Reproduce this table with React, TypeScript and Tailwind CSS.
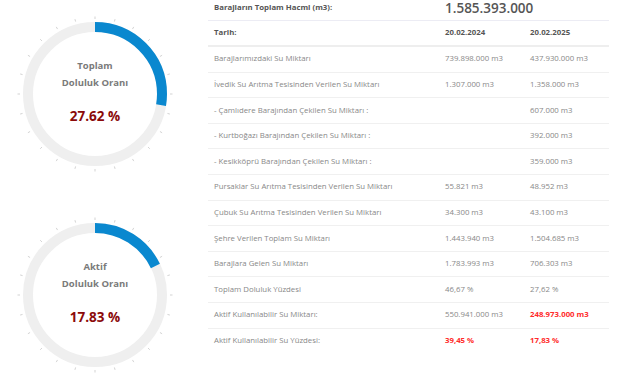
import React from 'react';

const rows = [
    { label: 'Barajlarımızdaki Su Miktarı', a: '739.898.000 m3', b: '437.930.000 m3' },
    { label: 'İvedik Su Arıtma Tesisinden Verilen Su Miktarı', a: '1.307.000 m3', b: '1.358.000 m3' },
    { label: '- Çamlıdere Barajından Çekilen Su Miktarı :', a: '', b: '607.000 m3' },
    { label: '- Kurtboğazı Barajından Çekilen Su Miktarı :', a: '', b: '392.000 m3' },
    { label: '- Kesikköprü Barajından Çekilen Su Miktarı :', a: '', b: '359.000 m3' },
    { label: 'Pursaklar Su Arıtma Tesisinden Verilen Su Miktarı', a: '55.821 m3', b: '48.952 m3' },
    { label: 'Çubuk Su Arıtma Tesisinden Verilen Su Miktarı', a: '34.300 m3', b: '43.100 m3' },
    { label: 'Şehre Verilen Toplam Su Miktarı', a: '1.443.940 m3', b: '1.504.685 m3' },
    { label: 'Barajlara Gelen Su Miktarı', a: '1.783.993 m3', b: '706.303 m3' },
    { label: 'Toplam Doluluk Yüzdesi', a: '46,67 %', b: '27,62 %' },
    { label: 'Aktif Kullanılabilir Su Miktarı:', a: '550.941.000 m3', b: '248.973.000 m3', redB: true },
    { label: 'Aktif Kullanılabilir Su Yüzdesi:', a: '39,45 %', b: '17,83 %', redA: true, redB: true, last: true },
];

function Gauge({ title, value, percent }: { title: string; value: string; percent: number }) {
    const r = 67;
    const c = 2 * Math.PI * r;
    const ticks = Array.from({ length: 24 }, (_, i) => i * 15);
    return (
        <div className="relative w-[170px] h-[170px]">
            <svg width="170" height="170" viewBox="0 0 170 170" className="absolute inset-0">
                {ticks.map((deg) => {
                    const a = (deg * Math.PI) / 180;
                    return (
                        <line
                            key={deg}
                            x1={85 + Math.sin(a) * 75}
                            y1={85 - Math.cos(a) * 75}
                            x2={85 + Math.sin(a) * 77.5}
                            y2={85 - Math.cos(a) * 77.5}
                            stroke="#c8c8c8"
                            strokeWidth="0.8"
                        />
                    );
                })}
                <circle cx="85" cy="85" r={r} fill="none" stroke="#efefef" strokeWidth="10" />
                <circle
                    cx="85"
                    cy="85"
                    r={r}
                    fill="none"
                    stroke="#0a88cf"
                    strokeWidth="10"
                    strokeDasharray={`${(c * percent) / 100} ${c}`}
                    transform="rotate(-90 85 85)"
                />
            </svg>
            <div className="absolute inset-0 flex flex-col items-center">
                <div className="mt-[48px] text-[9.5px] leading-[17px] font-bold text-[#7a7a7a]">{title}</div>
                <div className="text-[9.5px] leading-[17px] font-bold text-[#7a7a7a]">Doluluk Oranı</div>
                <div className="mt-[17px] text-[13.5px] leading-[17px] font-bold text-[#8b0a0a]">{value}</div>
            </div>
        </div>
    );
}

export default function App() {
    return (
        <div className="w-[640px] h-[377px] bg-white flex overflow-hidden" style={{ fontFamily: '"Open Sans", sans-serif' }}>
            {/* Gauges */}
            <div className="w-[208px] pl-[10px] pt-[9px] flex flex-col gap-[34px]">
                <Gauge title="Toplam" value="27.62 %" percent={27.62} />
                <Gauge title="Aktif" value="17.83 %" percent={17.83} />
            </div>

            {/* Table */}
            <div className="w-[401px] text-[7.8px]">
                <div className="h-[21px] flex border-b border-[#ececf4]">
                    <div className="w-[231px] pl-[6px] font-bold text-[#555] leading-[14px]">Barajların Toplam Hacmi (m3):</div>
                    <div className="pl-[6px] text-[13.5px] leading-[16px] font-semibold text-[#555]">1.585.393.000</div>
                </div>
                <div className="h-[26px] flex items-center border-b-2 border-[#eeeeee] font-bold text-[#555]">
                    <div className="w-[231px] pl-[6px]">Tarih:</div>
                    <div className="w-[85px] pl-[6px]">20.02.2024</div>
                    <div className="w-[85px] pl-[6px]">20.02.2025</div>
                </div>
                {rows.map((row) => (
                    <div
                        key={row.label}
                        className={`h-[25.6px] flex items-center text-[#888] ${row.last ? '' : 'border-b border-[#f0f0f0]'}`}
                    >
                        <div className="w-[231px] pl-[6px]">{row.label}</div>
                        <div className={`w-[85px] pl-[6px] ${row.redA ? 'font-bold text-[#ff2b2b]' : ''}`}>{row.a}</div>
                        <div className={`w-[85px] pl-[6px] ${row.redB ? 'font-bold text-[#ff2b2b]' : ''}`}>{row.b}</div>
                    </div>
                ))}
            </div>
        </div>
    );
}
